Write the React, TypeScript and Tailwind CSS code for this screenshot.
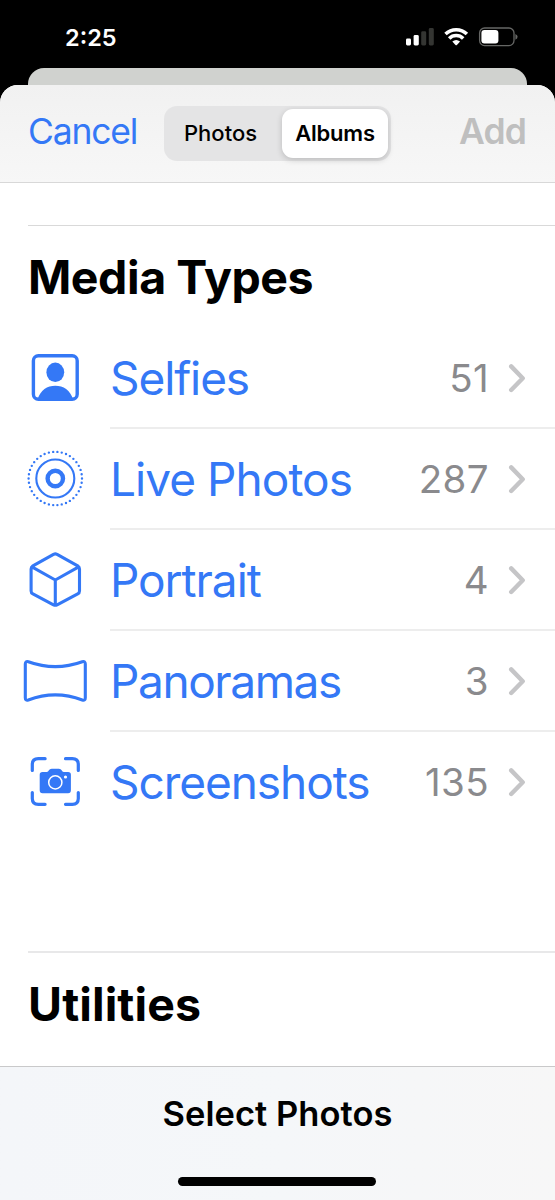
import type { ReactNode } from "react";

function Glyph({ children }: { children: ReactNode }) {
  return (
    <svg viewBox="-32.3 -30.5 64 61" width="64" height="61" fill="none" stroke="#3478f6" strokeLinecap="round" strokeLinejoin="round" className="shrink-0 overflow-visible">
      {children}
    </svg>
  );
}

const selfies = (
  <Glyph>
    <rect x="-21.9" y="-21.7" width="43.8" height="43.4" rx="5" strokeWidth="3.4" />
    <ellipse cx="0" cy="-5.2" rx="8.9" ry="9.7" fill="#3478f6" stroke="none" />
    <path d="M-17.8 22 C-15 12.5 -8 8.2 0 8.2 C8 8.2 15 12.5 17.8 22Z" fill="#3478f6" stroke="none" />
  </Glyph>
);

const live = (
  <Glyph>
    <circle r="26.7" pathLength="38" strokeWidth="2.4" strokeDasharray="0 1" />
    <circle r="19" strokeWidth="2.1" />
    <circle r="7.7" strokeWidth="4.4" />
  </Glyph>
);

const cube = (
  <Glyph>
    <path strokeWidth="3.1" d="M-1.8 -25.2 Q0 -26 1.8 -25.2 L22.4 -13.6 Q24.2 -12.4 24.2 -10.4 V11.4 Q24.2 13.4 22.4 14.4 L1.8 25.4 Q0 26.2 -1.8 25.4 L-22.4 14.4 Q-24.2 13.4 -24.2 11.4 V-10.4 Q-24.2 -12.4 -22.4 -13.6Z M-23.4 -12.6 L0 0.5 L23.4 -12.6 M0 0.5 V25.6" />
  </Glyph>
);

const pano = (
  <Glyph>
    <path strokeWidth="3.1" d="M-27 -18.8 Q0 -9 27 -18.8 Q30 -19.6 30 -16.4 V17.2 Q30 20.4 27 19.5 Q0 9.2 -27 19.5 Q-30 20.4 -30 17.2 V-16.4 Q-30 -19.6 -27 -18.8Z" />
  </Glyph>
);

const shots = (
  <Glyph>
    <path strokeWidth="3.2" d="M-23 -11 V-17 Q-23 -22.8 -17 -22.8 H-10.2 M10.2 -22.8 H17 Q23 -22.8 23 -17 V-11 M23 11 V17 Q23 22.8 17 22.8 H10.2 M-10.2 22.8 H-17 Q-23 22.8 -23 17 V11" />
    <path fill="#3478f6" stroke="none" d="M-15.6 -6.8 Q-15.6 -9.6 -12.8 -9.6 H-8.4 C-6.6 -9.6 -6.4 -12.8 -3.6 -12.8 H3.6 C6.4 -12.8 6.6 -9.6 8.4 -9.6 H12.8 Q15.6 -9.6 15.6 -6.8 V8.8 Q15.6 11.8 12.8 11.8 H-12.8 Q-15.6 11.8 -15.6 8.8Z" />
    <circle cy="0.9" r="6.6" stroke="white" strokeWidth="1.5" />
    <circle cx="10.2" cy="-4.5" r="1.6" fill="white" stroke="none" />
  </Glyph>
);

const rows = [
  { label: "Selfies", count: "51", icon: selfies, track: "tracking-[-1.1px]" },
  { label: "Live Photos", count: "287", icon: live, track: "tracking-[-0.95px]" },
  { label: "Portrait", count: "4", icon: cube, track: "tracking-[-1.05px]" },
  { label: "Panoramas", count: "3", icon: pano, track: "tracking-[-1.4px]" },
  { label: "Screenshots", count: "135", icon: shots, track: "tracking-[-1.05px]" },
];

function StatusBar() {
  return (
    <div className="flex h-[68px] shrink-0 justify-between pl-[65px] pr-[37px] text-white">
      <span className="mt-[22px] h-[30px] text-[23.5px] leading-[31px] font-semibold">2:25</span>
      <svg width="112" height="20" viewBox="406 27 112 20" className="mt-[27px]">
        <rect x="406" y="38.5" width="5" height="7" rx="1.4" fill="white" />
        <rect x="413.6" y="35" width="5.2" height="10.5" rx="1.4" fill="white" />
        <rect x="421.2" y="31.3" width="5" height="14.2" rx="1.4" fill="#343532" />
        <rect x="428.8" y="28" width="5" height="17.5" rx="1.4" fill="#343532" />
        <g fill="none" stroke="white" strokeWidth="3.5">
          <path d="M445.5 34.1 A15.3 15.3 0 0 1 466.9 34.1" />
          <path d="M449.2 38.5 A9.9 9.9 0 0 1 463.2 38.5" />
        </g>
        <path d="M452.3 41.6 Q456.2 38.6 460.1 41.6 L456.9 44.9 Q456.2 45.6 455.5 44.9Z" fill="white" />
        <rect x="479.6" y="28" width="34.4" height="17.6" rx="5" fill="none" stroke="#666765" strokeWidth="1.3" />
        <rect x="481.4" y="30" width="17" height="13.4" rx="3" fill="white" />
        <path d="M515.4 33.9 Q517.6 35 517.6 36.8 Q517.6 38.6 515.4 39.7Z" fill="#666765" />
      </svg>
    </div>
  );
}

export default function App() {
  return (
    <div className="flex h-[1200px] w-[555px] flex-col overflow-hidden bg-black font-['Inter',sans-serif] whitespace-nowrap">
      <StatusBar />
      <div className="mx-7 h-[17px] shrink-0 rounded-t-[16px] bg-[#d0d2cf]" />
      <div className="flex min-h-0 flex-1 flex-col overflow-hidden rounded-t-[18px] bg-white">
        <header className="flex h-[98px] shrink-0 items-start justify-between border-b border-[#d8d8d8] bg-linear-to-b from-[#f1f1f1] to-[#f7f7f7] pr-[29px] pl-7">
          <span className="mt-[26px] w-[136px] text-[35.5px] leading-[41px] tracking-[-1.2px] text-[#3478f6]">Cancel</span>
          <div className="mt-[21px] flex h-[55px] w-[227px] rounded-[13px] bg-[#e4e4e5] p-[3px] text-[22px] leading-[49px] font-medium text-black">
            <span className="w-[115px] pl-[17px]">Photos</span>
            <span className="h-[49px] w-[106px] rounded-[11px] bg-white text-center font-semibold tracking-[-0.2px] shadow-[0_2px_6px_rgba(0,0,0,0.18)]">Albums</span>
          </div>
          <span className="mt-[26px] w-[135px] text-right text-[35.5px] leading-[41px] font-semibold tracking-[-0.9px] text-[#bfbfbf]">Add</span>
        </header>
        <main className="flex min-h-0 flex-1 flex-col pt-[42px]">
          <section className="h-[726px] shrink-0">
            <div className="ml-7 h-px bg-[#d9d9d9]" />
            <h2 className="ml-7 h-[102px] text-[46.5px] leading-[103px] font-bold tracking-[-0.45px]">Media Types</h2>
            {rows.map((r, i) => (
              <div key={r.label} className="flex h-[101px] pl-[23px]">
                <div className="flex h-[99px] w-[87px] items-center">{r.icon}</div>
                <div className={`flex flex-1 items-center border-[#ededed] pr-[29px] ${i < 4 ? "border-b-2" : "h-[99px]"}`}>
                  <span className={`flex-1 text-[46px] leading-[60px] text-[#3478f6] ${r.track}`}>{r.label}</span>
                  <span className="mr-[18px] text-[38.5px] leading-[60px] tracking-[0.4px] text-[#8a8a8d]">{r.count}</span>
                  <svg width="19" height="30" viewBox="0 0 19 30" fill="none" stroke="#c5c5c7" strokeWidth="4.4" strokeLinecap="round" strokeLinejoin="round">
                    <path d="M4.2 3.4 L15.7 15.2 L4.2 27" />
                  </svg>
                </div>
              </div>
            ))}
          </section>
          <section className="flex-1">
            <div className="ml-7 h-[2px] bg-[#e8e8e9]" />
            <h2 className="ml-7 text-[46.5px] leading-[103px] font-bold tracking-[0.1px]">Utilities</h2>
          </section>
        </main>
        <footer className="flex h-[134px] shrink-0 flex-col items-center border-t border-[#c9c9ca] bg-linear-to-r from-[#f4f6f9] via-[#f5f7f9] to-[#f7f7f7] pt-[22px]">
          <span className="text-[34.5px] leading-[50px] font-semibold tracking-[0.05px]">Select Photos</span>
          <div className="mt-[38px] mr-px h-[9px] w-[198px] rounded-full bg-black" />
        </footer>
      </div>
    </div>
  );
}
